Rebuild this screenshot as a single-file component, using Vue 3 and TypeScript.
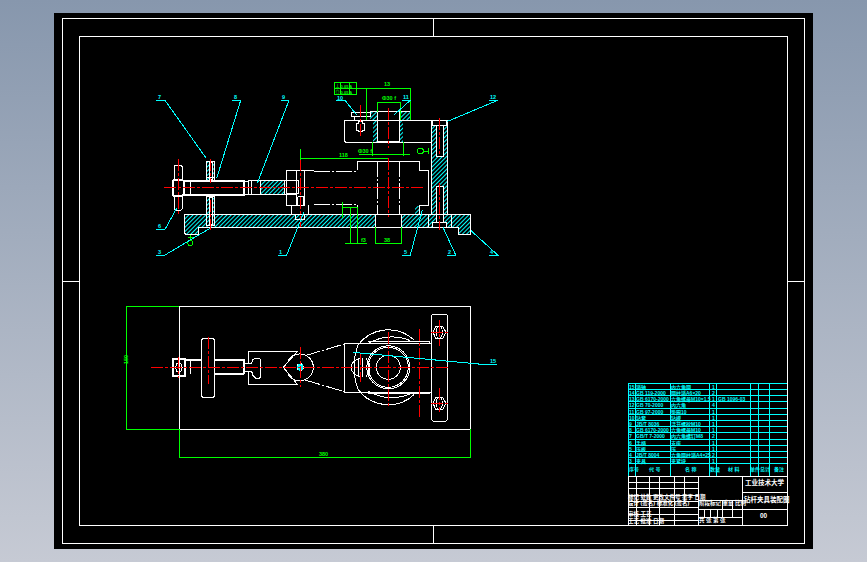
<script setup lang="ts">
// all drawing coordinates are page pixels, the svg viewBox starts at the sheet corner
const thick: string[] = [
  // handle hub and shaft, section
  'M172.5 181L174 180H182L184 181V194.5L182 195.7H174L172.5 194.5Z',
  'M184 180.7H244V194.7H184Z',
  'M286 193.5H296',
  // nut and shaft, plan
  'M172.7 359.3H184.7V375.7H172.7Z',
  'M184.7 360.3H201.3',
  'M214.7 360.3H244V374.3',
  'M214.7 374.3H244',
]

const white: string[] = [
  // handle, side view
  'M174 180V166.5L175 165.7H181L182 166.5V180',
  'M174 195.7V209L175 210H181L182 209V195.7',
  'M190.7 181V194.5',
  'M244 181.5H248.7V194H244',
  'M248.7 180.5H286V194.5H248.7Z',
  'M251.3 180.5V194.5',
  'M260 180.5V194.5',
  'M284 180.5V194.5',
  // nut and stud
  'M286 170H296V205.3H286Z',
  'M286 180H298V193.5H286',
  'M291.3 205.3V214.3',
  'M308.7 205.3V214.3',
  'M295.3 214.3V219.3H304.7V214.3',
  'M297.5 196.5H303V205',
  'M297.5 196.5V205',
  // body outline
  'M296 170H304V205.3H296',
  'M304 170H314',
  'M357 170V161.3H419.3V170H428.7V205.3H419.3V214.3',
  'M357 205.3V214.3',
  // base plate
  'M184 214.3H470V234.7H458.3V227.3H198V234H185.5L184 232Z',
  'M375.3 214.3V227.3',
  'M401.3 214.3V227.3',
  'M428.3 214.3V227.3',
  'M451.3 214.3V227.3',
  // top arm
  'M344.5 120.7H431.3V142.7H346L344.3 141V122Z',
  'M370 111.7H410V120.7',
  'M377.3 111.7V141.7',
  'M399.3 111.7V141.7',
  'M377.3 141.7H399.3',
  // clamp pin
  'M351 112.5H370V116.7H351Z',
  'M354 116.7V120.7',
  'M366 116.7V120.7',
  'M356 123H358V121.7H362.5V123H364.7V130H362.5V131.7H358V130H356Z',
  // column
  'M431.3 120.7H447.7V214.3',
  'M431.3 120.7V214.3',
  // stud on the left
  'M206 161.3H214.7V180',
  'M206 161.3V180',
  'M206 196H214.7V225.3H206Z',
  'M206.5 177H214',
  // lower view plate
  'M179.3 306.7H470.3V429.3H179.3Z',
  // handle lower view
  'M201.3 340L202.7 338.7H213.3L214.7 340V396L213.3 397.3H202.7L201.3 396Z',
  'M176.5 364L178.7 363.3L181 364L182 367.5L181 371L178.7 371.7L176.5 371L175.5 367.5Z',
  'M190.7 360.3V374.3',
  'M245 363H251.7',
  'M245 371.7H251.7',
  'M251.7 363L253 359.5L256 358.3H259.5L260.7 360V376.5L259.5 378.3H256L253 375.5L251.7 371.7',
  // fork
  'M297.3 351.3H248.3V363',
  'M248.3 371.7V384.3H297.3L283.3 367.3L297.3 351.3',
  // lower view block
  'M344.3 343.7H431.3',
  'M344.3 343.7V392.3H431.3',
  'M368 341H429',
  'M368 393.5H429',
  'M429 341V343.7',
  'M429 392.3V394',
  // lens
  'M360.3 358C354 360 351.3 364 351.3 367.3C351.3 371 354 375 360.3 377',
  'M366 358.5C369 362 370 365 370 367.3C370 370 369 373 366 376.5',
  'M358 358V377',
  'M362.5 358V377',
  // slot plate
  'M431.3 316L433 314.3H446L447.7 316V419.5L446 421H433L431.3 419.5Z',
  // hex heads
  'M433 332.3L436 326H442.5L446 332.3L442.5 338.7H436Z',
  'M433 403.3L436 397H442.5L446 403.3L442.5 409.7H436Z',
]

// hidden edges, same colour, broken line
const hidden: string[] = [
  'M314 171.3H356.5',
  'M314 204.5H357',
  'M377.3 161.3V214.3',
  'M399.3 161.3V214.3',
  'M305 355.7L344.3 344',
  'M305 380L344.3 391.7',
]

const arcs: string[] = [
  'M358 345.3A37.5 37.5 0 0 1 414 340',
  'M358 389.3A37.5 37.5 0 0 0 414 394.6',
  'M368.3 343.5Q388 332 410 340.5',
  'M368.3 391.1Q388 402.6 410 394.1',
  'M358 345.3Q350 367 358 389.3',
  'M300 354A13.3 13.3 0 0 1 300 380.6',
  'M300 354A13.3 13.3 0 0 0 288 361',
  'M300 380.6A13.3 13.3 0 0 1 288 374',
]

const rounds = [
  { x: 388.3, y: 367.3, rx: 21.5, ry: 21.5 },
  { x: 388.3, y: 367.3, rx: 20, ry: 20 },
  { x: 388.3, y: 367.3, rx: 12, ry: 12 },
  { x: 439.3, y: 332.3, rx: 3, ry: 6 },
  { x: 439.3, y: 403.3, rx: 3, ry: 6 },
]

const center: string[] = [
  'M164 187.3H423',
  'M178.3 159V216',
  'M210.3 159V183',
  'M210.3 200V230',
  'M300.3 159V227',
  'M360.3 105V135.7',
  'M388.3 108V148',
  'M388.3 158V217',
  'M439.3 118V155',
  'M439.3 183V230',
  'M151 367.3H450',
  'M208.3 336.7V384.3',
  'M178.7 356.7V377.7',
  'M300.3 346.7V386.7',
  'M388.3 331.7V406.7',
  'M360.3 353V382',
  'M419.3 329V417.7',
  'M439.3 320V345.7',
  'M439.3 388V412.3',
  'M431 332.3H449',
  'M431 403.3H449',
]

const dims: string[] = [
  // tolerance frame
  'M334.5 82.5H356.7V94.7H334.5Z',
  'M334.5 88.5H356.7',
  'M340 82.5V94.7',
  'M349 82.5V94.7',
  // upper dimensions
  'M356.7 88.3H410.7',
  'M366.3 88.3V120',
  'M410.3 88.3V120',
  'M377.3 102.3H400',
  'M377.3 102.3V112',
  'M400 102.3V120',
  'M372.7 141.7V156',
  'M403.3 141.7V156',
  'M359 154.3H410',
  'M300 158.3H388.3',
  'M300 149.3V160',
  // datum symbol
  'M423.5 151H428.3',
  'M428.3 148V154',
  // lower dimensions on the section
  'M350 206.7V244.3',
  'M357.3 206.7V244.3',
  'M342.7 207H357',
  'M342.7 201.7V218.3',
  'M345 243.3H366.7',
  'M375.3 227.3V243.3H401.3V227.3',
  // datum at the foot
  'M190.3 234.5V240',
  'M187.5 237H193.5',
  // plan view
  'M126.3 306.7H179.3',
  'M126.3 429.3H179.3',
  'M126.3 306.7V429.3',
  'M179.3 429.3V458.3',
  'M470.3 429.3V458.3',
  'M179.3 457.3H470.3',
]

const leaders: string[] = [
  'M156 100.3H165L206 158',
  'M232.3 100.3H240.7L216.7 178.3',
  'M280.7 100.3H289L257.3 183.3',
  'M156 229.3H165L176.7 208.3',
  'M156 255H165L210 228.3',
  'M278.3 255H286.7L304 211.7',
  'M336 100.3H345L356.7 115',
  'M401.7 100.3H410.3L394 115',
  'M489 100.3H497.7L446.7 121.7',
  'M402.3 255H410.3L422.3 210',
  'M447.3 255H455.7L442.7 226.7',
  'M489 255H497.7L471 230.7',
  'M352.7 352.3L481.7 364.3H496.7',
]

const labels = [
  { x: 158, y: 99, t: '7' },
  { x: 234, y: 99, t: '8' },
  { x: 282, y: 99, t: '9' },
  { x: 158, y: 228, t: '6' },
  { x: 158, y: 254, t: '3' },
  { x: 279, y: 254, t: '1' },
  { x: 337, y: 100, t: '10' },
  { x: 403, y: 99, t: '11' },
  { x: 490, y: 99, t: '12' },
  { x: 404, y: 254, t: '5' },
  { x: 448, y: 254, t: '2' },
  { x: 490, y: 254, t: '4' },
  { x: 490, y: 363, t: '15' },
]

const dimTexts = [
  { x: 384, y: 86, t: '13' },
  { x: 382, y: 100, t: 'Φ30 f' },
  { x: 358, y: 153, t: 'Φ30 f' },
  { x: 339, y: 157, t: '118' },
  { x: 361, y: 242, t: 'f3' },
  { x: 384, y: 242, t: '38' },
  { x: 319, y: 456, t: '380' },
]

const frameTexts = [
  { x: 335.5, y: 87.5, t: '⊥ 0.05 A' },
  { x: 335.5, y: 93.5, t: '◎ 0.05 A' },
]

const hatches = [
  { x: 184, y: 214.3, w: 191, h: 13 },
  { x: 401.3, y: 214.3, w: 68.7, h: 13 },
  { x: 184, y: 227, w: 13.5, h: 7 },
  { x: 458.3, y: 227, w: 11.7, h: 7.5 },
  { x: 431.3, y: 120.7, w: 16.4, h: 93.6 },
  { x: 370, y: 111.7, w: 7.3, h: 9 },
  { x: 399.3, y: 111.7, w: 10.7, h: 9 },
  { x: 372.7, y: 120.7, w: 4.6, h: 21 },
  { x: 399.3, y: 120.7, w: 4, h: 21 },
  { x: 260, y: 180.5, w: 24, h: 14 },
  { x: 206, y: 161.3, w: 8.7, h: 18.7 },
  { x: 206, y: 196, w: 8.7, h: 18.3 },
  { x: 415, y: 206, w: 5, h: 8.3 },
]

// screw bodies and heads, knocked out of the hatching
const screws = [
  { x: 436, y: 125, w: 7.3, h: 31 },
  { x: 436, y: 186.7, w: 7.3, h: 36 },
  { x: 432, y: 120.7, w: 14.7, h: 4.3 },
  { x: 432, y: 222.7, w: 14.7, h: 4.6 },
  { x: 209, y: 197, w: 3, h: 27 },
  { x: 209, y: 162, w: 3, h: 17 },
]

// parts list
const rowTops = [383.3, 389.5, 395.7, 401.9, 408.1, 414.3, 420.5, 426.7, 432.9, 439.1, 445.3, 451.5, 457.7, 463.7]
const colXs = [628.3, 635, 670.7, 709.3, 716.7, 750.3, 758.3, 769.3, 786.7]
const parts = [
  ['15', '销轴', '内六角圆', '1', ''],
  ['14', 'GB 119-2000', '圆柱销A6×20', '2', ''],
  ['13', 'GB 6170-2000', '六角螺母M10×1.5', '1', 'GB 1096-03'],
  ['12', 'GB 70-2000', '内六角', '4', ''],
  ['11', 'GB 97-2000', '垫圈10', '1', ''],
  ['10', '钻套', '钻模', '1', ''],
  ['9', 'JB/T 8036', '活节螺栓M10', '1', ''],
  ['8', 'GB 6170-2000', '六角螺母M10', '1', ''],
  ['7', 'GB/T 7-2000', '内六角螺钉M8', '2', ''],
  ['6', '手柄', '支座', '1', ''],
  ['5', '压板', '压', '1', ''],
  ['4', 'JB/T 8004', '六角圆柱销A4×25', '2', ''],
  ['3', '夹具', '夹紧块', '1', ''],
]
const headers = [
  { x: 629, t: '序号' },
  { x: 649, t: '代 号' },
  { x: 685, t: '名 称' },
  { x: 710, t: '数量' },
  { x: 728, t: '材 料' },
  { x: 750, t: '单件总计' },
  { x: 774, t: '备注' },
]

// title block, left grid and middle cells
const blockLines: string[] = [
  'M628.3 476V525',
  'M628.3 476H787V525',
  'M628.3 482.3H698.3',
  'M628.3 488.7H698.3',
  'M628.3 495H698.3',
  'M628.3 501.3H698.3',
  'M628.3 507.7H698.3',
  'M628.3 514H698.3',
  'M628.3 520.3H698.3',
  'M636.3 476V525',
  'M649.3 476V525',
  'M659.3 476V525',
  'M674.3 476V525',
  'M684.3 476V501',
  'M698.3 476V525',
  'M742.3 476V525',
  'M698.3 500.7H742.3',
  'M698.3 509.3H742.3',
  'M698.3 517.3H742.3',
  'M704 509.3V517.3',
  'M710 509.3V517.3',
  'M717 509.3V517.3',
  'M722 500.7V517.3',
  'M732 500.7V517.3',
  'M742.3 492.3H787',
  'M742.3 509.3H787',
]
const blockTexts = [
  { x: 628, y: 498.5, t: '标记 处数 更改文件号 签字 日期', big: false },
  { x: 628, y: 504.5, t: '设计 (签名) 标准化 (签名)', big: false },
  { x: 628, y: 516, t: '审核 工艺', big: false },
  { x: 628, y: 523, t: '工艺 批准 日期', big: false },
  { x: 699, y: 505, t: '阶段标记 重量 比例', big: false },
  { x: 699, y: 522, t: '共 张 第 张', big: false },
  { x: 745, y: 485, t: '工业技术大学', big: true },
  { x: 744, y: 502, t: '钻杆夹具装配图', big: true },
  { x: 760, y: 518, t: '00', big: true },
]
</script>

<template>
  <div class="page">
    <svg class="sheet" viewBox="54 13 759 536" xmlns="http://www.w3.org/2000/svg">
      <defs>
        <pattern id="hatch" width="3" height="3" patternUnits="userSpaceOnUse" patternTransform="rotate(45)">
          <line x1="0" y1="0" x2="0" y2="3" class="hatch-line" />
        </pattern>
      </defs>

      <!-- sheet frames and centring marks -->
      <g class="frame">
        <rect x="62.5" y="18.5" width="742" height="525" />
        <rect x="79.5" y="36.5" width="707.5" height="489" />
        <path d="M62.5 281.5H79.5M787 281.5H804.5M433.5 18.5V36.5M433.5 525V543.5" />
      </g>

      <rect v-for="(h, i) in hatches" :key="'h' + i" :x="h.x" :y="h.y" :width="h.w" :height="h.h" fill="url(#hatch)" />
      <rect v-for="(s, i) in screws" :key="'s' + i" :x="s.x" :y="s.y" :width="s.w" :height="s.h" class="screw" />
      <rect x="375.5" y="214.8" width="25.5" height="12" fill="#000" />

      <g class="white">
        <path v-for="(d, i) in white" :key="i" :d="d" />
        <path v-for="(d, i) in thick" :key="'t' + i" :d="d" class="thick" />
        <path v-for="(d, i) in hidden" :key="'d' + i" :d="d" class="broken" />
        <path v-for="(d, i) in arcs" :key="'a' + i" :d="d" />
        <ellipse v-for="(c, i) in rounds" :key="'c' + i" :cx="c.x" :cy="c.y" :rx="c.rx" :ry="c.ry" />
      </g>

      <circle cx="300.3" cy="367.3" r="3.5" class="hub" />

      <g class="center">
        <path v-for="(d, i) in center" :key="i" :d="d" />
      </g>

      <g class="dims">
        <path v-for="(d, i) in dims" :key="i" :d="d" />
        <circle cx="420.3" cy="151" r="3" />
        <circle cx="190.3" cy="243" r="2.5" />
      </g>
      <g class="dim-text">
        <text v-for="(t, i) in dimTexts" :key="i" :x="t.x" :y="t.y">{{ t.t }}</text>
        <text v-for="(t, i) in frameTexts" :key="'f' + i" :x="t.x" :y="t.y" class="small">{{ t.t }}</text>
        <text x="126" y="372" transform="rotate(-90 123 367)">150</text>
      </g>

      <g class="leaders">
        <path v-for="(d, i) in leaders" :key="i" :d="d" />
      </g>
      <g class="leader-text">
        <text v-for="(l, i) in labels" :key="i" :x="l.x" :y="l.y">{{ l.t }}</text>
      </g>

      <!-- parts list -->
      <g class="leaders">
        <line v-for="(y, i) in rowTops" :key="'r' + i" x1="628.3" x2="787" :y1="y" :y2="y" />
        <line v-for="(x, i) in colXs.slice(0, 8)" :key="'k' + i" :x1="x" :x2="x" y1="383.3" y2="476" />
      </g>
      <g class="table-text">
        <template v-for="(p, i) in parts" :key="i">
          <text :x="629" :y="rowTops[i] + 5.4">{{ p[0] }}</text>
          <text :x="636" :y="rowTops[i] + 5.4">{{ p[1] }}</text>
          <text :x="671" :y="rowTops[i] + 5.4">{{ p[2] }}</text>
          <text :x="712" :y="rowTops[i] + 5.4">{{ p[3] }}</text>
          <text :x="718" :y="rowTops[i] + 5.4">{{ p[4] }}</text>
        </template>
        <text v-for="(h, i) in headers" :key="'t' + i" :x="h.x" y="471">{{ h.t }}</text>
      </g>

      <!-- title block -->
      <g class="white">
        <path v-for="(d, i) in blockLines" :key="i" :d="d" />
      </g>
      <g class="block-text">
        <text v-for="(t, i) in blockTexts" :key="i" :x="t.x" :y="t.y" :class="{ big: t.big }">{{ t.t }}</text>
      </g>
    </svg>
  </div>
</template>

<style scoped>
.page {
  box-sizing: border-box;
  height: 100vh;
  padding: 13px 54px;
  display: flex;
  background: linear-gradient(#8797ad, #c6cad4);
}
.sheet {
  flex: 1;
  display: block;
  background: #000;
  shape-rendering: crispEdges;
}
.frame path,
.frame rect {
  fill: none;
  stroke: #fff;
  stroke-width: 1;
}
.white path,
.white ellipse {
  fill: none;
  stroke: #fff;
  stroke-width: 1;
}
.white path.thick {
  stroke-width: 2;
}
.broken {
  stroke-dasharray: 16 2 2 2;
}
.hatch-line {
  stroke: #0ff;
  stroke-width: 1;
}
.screw {
  fill: #000;
  stroke: #fff;
}
.hub {
  fill: #0ff;
  stroke: #fff;
  stroke-dasharray: 2 2;
}
.center path {
  fill: none;
  stroke: #f00;
  stroke-width: 1;
  stroke-dasharray: 12 2 3 2;
}
.dims path,
.dims circle {
  fill: none;
  stroke: #0f0;
  stroke-width: 1;
}
.leaders path,
.leaders line {
  fill: none;
  stroke: #0ff;
  stroke-width: 1;
}
text {
  font-family: "Liberation Sans", "Noto Sans CJK SC", sans-serif;
  font-weight: 700;
}
.dim-text text {
  font-size: 5.5px;
  fill: #0f0;
}
.dim-text text.small {
  font-size: 4px;
}
.leader-text text {
  font-size: 5.5px;
  fill: #0ff;
}
.table-text text {
  font-size: 5px;
  fill: #0ff;
}
.block-text text {
  font-size: 5.5px;
  fill: #fff;
}
.block-text text.big {
  font-size: 6.5px;
}
</style>
